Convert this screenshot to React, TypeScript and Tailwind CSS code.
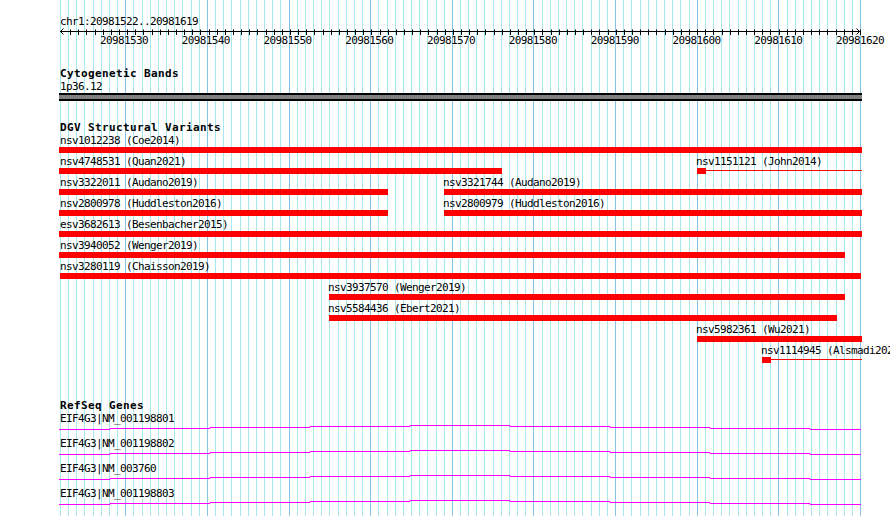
import React from "react";

const START = 20981522;
const gridX = (i: number) => Math.round(60 + (i * 800) / 98);
const tickX = (i: number) => Math.round(62 + (i * 798) / 98);
const labelCX = (i: number) => 124 + ((i - 8) * 736) / 90;

type Feature = { label: string; x: number; end: number; stub?: boolean };

const DGV: Feature[][] = [
  [{ label: "nsv1012238 (Coe2014)", x: 59, end: 862 }],
  [
    { label: "nsv4748531 (Quan2021)", x: 59, end: 502 },
    { label: "nsv1151121 (John2014)", x: 697, end: 862, stub: true },
  ],
  [
    { label: "nsv3322011 (Audano2019)", x: 59, end: 388 },
    { label: "nsv3321744 (Audano2019)", x: 444, end: 862 },
  ],
  [
    { label: "nsv2800978 (Huddleston2016)", x: 59, end: 388 },
    { label: "nsv2800979 (Huddleston2016)", x: 444, end: 862 },
  ],
  [{ label: "esv3682613 (Besenbacher2015)", x: 59, end: 862 }],
  [{ label: "nsv3940052 (Wenger2019)", x: 59, end: 845 }],
  [{ label: "nsv3280119 (Chaisson2019)", x: 60, end: 861 }],
  [{ label: "nsv3937570 (Wenger2019)", x: 329, end: 845 }],
  [{ label: "nsv5584436 (Ebert2021)", x: 329, end: 837 }],
  [{ label: "nsv5982361 (Wu2021)", x: 697, end: 862 }],
  [{ label: "nsv1114945 (Alsmadi2021)", x: 762, end: 862, stub: true }],
];

const GENES = [
  "EIF4G3|NM_001198801",
  "EIF4G3|NM_001198802",
  "EIF4G3|NM_003760",
  "EIF4G3|NM_001198803",
];

const STEPS = [59, 110, 210, 310, 410, 510, 610, 710, 810, 861];
const LEVELS = [4.5, 3.5, 2.5, 1.5, 0.5, 1.5, 2.5, 3.5, 4.5];
const genePoints = (() => {
  const pts: string[] = [];
  for (let k = 0; k < LEVELS.length; k++) {
    pts.push(`${STEPS[k]},${LEVELS[k]}`);
    pts.push(`${STEPS[k + 1]},${LEVELS[k]}`);
  }
  return pts.join(" ");
})();

const MONO = "font-['DejaVu_Sans_Mono',monospace]";

function Grid() {
  return (
    <svg className="absolute left-0 top-0" width={890} height={516}>
      {Array.from({ length: 99 }, (_, i) => {
        const major = (START + i) % 10 === 0;
        const x = gridX(i) + 0.5;
        return (
          <line
            key={i}
            x1={x}
            x2={x}
            y1={0}
            y2={516}
            stroke={major ? "#84c4e8" : "#a6e8ee"}
            strokeWidth={1}
          />
        );
      })}
    </svg>
  );
}

function Ruler() {
  const labels: number[] = [];
  for (let i = 0; i <= 98; i++) if ((START + i) % 10 === 0) labels.push(i);
  return (
    <svg width={890} height={67} className="block" fontFamily="DejaVu Sans Mono, monospace" fontSize={11}>
      <text x={60} y={25} letterSpacing={-0.62} fill="#000">
        chr1:20981522..20981619
      </text>
      <line x1={60} y1={31.5} x2={860} y2={31.5} stroke="#000" />
      {Array.from({ length: 98 }, (_, k) => {
        const x = tickX(k + 1) + 0.5;
        return <line key={k} x1={x} x2={x} y1={29.5} y2={35} stroke="#000" />;
      })}
      <polyline points="63.5,28.5 60.5,31.5 63.5,34.5" fill="none" stroke="#000" />
      <polyline points="856.5,28.5 859.5,31.5 856.5,34.5" fill="none" stroke="#000" />
      {labels.map((i) => (
        <text key={i} x={labelCX(i)} y={44} textAnchor="middle" letterSpacing={-0.62} fill="#000">
          {START + i}
        </text>
      ))}
    </svg>
  );
}

function TrackTitle({ children, className = "" }: { children: React.ReactNode; className?: string }) {
  return (
    <div className={`pl-[60px] text-[11px] font-bold tracking-[0.38px] text-black ${className}`}>
      {children}
    </div>
  );
}

function DgvRow({ feats }: { feats: Feature[] }) {
  return (
    <div className="relative h-[21px]">
      {feats.map((f) => (
        <React.Fragment key={f.label}>
          <div
            className="absolute top-0 whitespace-nowrap text-[11px] leading-[12px] tracking-[-0.62px] text-black"
            style={{ left: f.x <= 60 ? 60 : f.x - 1 }}
          >
            {f.label}
          </div>
          {f.stub ? (
            <>
              <div className="absolute top-[12px] h-[6px] w-[9px] bg-[#ff0000]" style={{ left: f.x }} />
              <div
                className="absolute top-[14px] h-px bg-[#ff0000]"
                style={{ left: f.x + 9, width: f.end - f.x - 9 }}
              />
            </>
          ) : (
            <div
              className="absolute top-[12px] h-[6px] bg-[#ff0000]"
              style={{ left: f.x, width: f.end - f.x }}
            />
          )}
        </React.Fragment>
      ))}
    </div>
  );
}

function GeneRow({ name }: { name: string }) {
  return (
    <div>
      <div className="h-[13px] pl-[60px] text-[11px] leading-[13px] tracking-[-0.62px] text-black">{name}</div>
      <svg width={890} height={12} className="block">
        <polyline points={genePoints} fill="none" stroke="#ff00ff" strokeWidth={1} />
      </svg>
    </div>
  );
}

export default function App() {
  return (
    <div className={`relative h-[516px] w-[890px] overflow-hidden bg-white ${MONO}`}>
      <Grid />
      <div className="relative">
        <Ruler />
        <section>
          <TrackTitle className="h-[13px] leading-[13px]">Cytogenetic Bands</TrackTitle>
          <div className="h-[13px] pl-[60px] text-[11px] leading-[13px] tracking-[-0.62px] text-black">1p36.12</div>
          <div className="ml-[59px] h-[8px] w-[803px] border-y-2 border-black bg-[#808080]" />
        </section>
        <section className="mt-[20px]">
          <TrackTitle className="h-[14px] leading-[13px]">DGV Structural Variants</TrackTitle>
          {DGV.map((feats, i) => (
            <DgvRow key={i} feats={feats} />
          ))}
        </section>
        <section className="mt-[34px]">
          <TrackTitle className="h-[12px] leading-[12px]">RefSeq Genes</TrackTitle>
          {GENES.map((g) => (
            <GeneRow key={g} name={g} />
          ))}
        </section>
      </div>
    </div>
  );
}
